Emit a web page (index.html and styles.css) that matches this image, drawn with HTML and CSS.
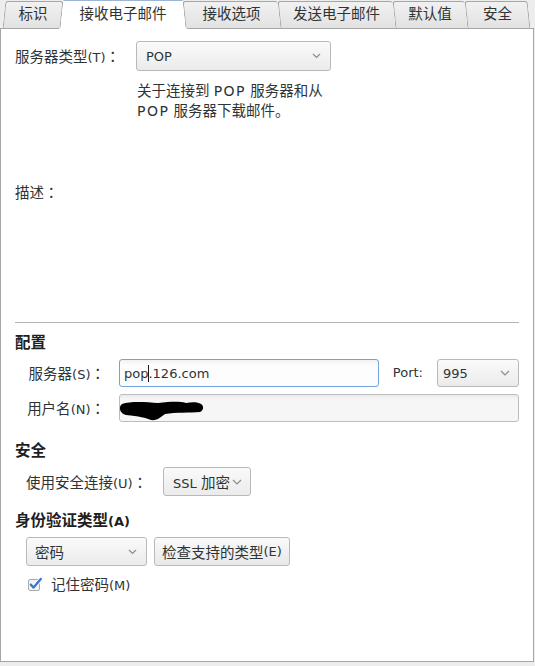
FILE: index.html
```html
<!DOCTYPE html>
<html lang="zh-CN">
<head>
<meta charset="utf-8">
<title>接收电子邮件</title>
<link rel="stylesheet" href="styles.css">
</head>
<body>
<div class="tabs">
  <div class="tab l">标识</div>
  <div class="tab active">接收电子邮件</div>
  <div class="tab r first">接收选项</div>
  <div class="tab r">发送电子邮件</div>
  <div class="tab r">默认值</div>
  <div class="tab r last">安全</div>
</div>
<div class="panel">
  <div class="type-grid">
    <div class="lbl"><span class="zh">服务器类型</span>(T)<span class="colon" lang="zh-TW">：</span></div>
    <div class="combo combo-type"><span>POP</span><svg class="chev" width="9" height="6" viewBox="0 0 9 6"><path d="M1 1 L4.5 4.5 L8 1" fill="none" stroke="#8c8c8c" stroke-width="1.2"/></svg></div>
    <div class="desc">
      <div class="desc-line"><span class="zh">关于连接到</span> <span class="lat">POP</span> <span class="zh">服务器和从</span></div>
      <div class="desc-line"><span class="lat">POP</span> <span class="zh">服务器下载邮件。</span></div>
    </div>
  </div>
  <div class="desc-label">描述<span class="colon" lang="zh-TW">：</span></div>
  <div class="sep"></div>

  <div class="heading first-heading"><span class="zh">配置</span></div>
  <div class="server-grid">
    <div class="lbl right"><span class="zh">服务器</span>(S)<span class="colon" lang="zh-TW">：</span></div>
    <div class="field focus"><span>pop</span><span class="caret"></span><span>.126.com</span></div>
    <div class="lbl">Port:</div>
    <div class="combo combo-port"><span>995</span><svg class="chev" width="10" height="6" viewBox="0 0 10 6"><path d="M1 1 L5 5 L9 1" fill="none" stroke="#8c8c8c" stroke-width="1.2"/></svg></div>
    <div class="lbl right"><span class="zh">用户名</span>(N)<span class="colon" lang="zh-TW">：</span></div>
    <div class="field user"><svg class="blob" width="86" height="20" viewBox="0 0 86 20"><path d="M4 3 C12 0 28 1 40 2 C52 1 60 0 68 2 C74 1 80 1 83 3 C86 5 86 9 82 11 C72 12 58 11 47 13 C43 16 39 20 33 19 C28 17 21 15 8 14 C2 13 0 6 4 3 Z" fill="#000"/></svg></div>
  </div>

  <div class="heading sec-heading"><span class="zh">安全</span></div>
  <div class="sec-row">
    <div class="lbl"><span class="zh">使用安全连接</span>(U)<span class="colon" lang="zh-TW">：</span></div>
    <div class="combo combo-ssl"><span>SSL <span class="zh">加密</span></span><svg class="chev" width="10" height="6" viewBox="0 0 10 6"><path d="M1 1 L5 5 L9 1" fill="none" stroke="#8c8c8c" stroke-width="1.2"/></svg></div>
  </div>

  <div class="heading auth-heading"><span class="zh">身份验证类型</span>(A)</div>
  <div class="auth-row">
    <div class="combo combo-auth"><span class="zh">密码</span><svg class="chev" width="9" height="6" viewBox="0 0 9 6"><path d="M1 1 L4.5 4.5 L8 1" fill="none" stroke="#8c8c8c" stroke-width="1.2"/></svg></div>
    <div class="button"><span class="zh">检查支持的类型</span>(E)</div>
  </div>

  <div class="check-row">
    <svg class="check" width="16" height="16" viewBox="0 0 16 16"><rect x="0.5" y="3.5" width="11" height="11" rx="1.5" fill="#f2f2f2" stroke="#a9a9a9"/><path d="M2.8 8.6 L5.6 11.6 L12.8 3" fill="none" stroke="#ffffff" stroke-width="4" stroke-linecap="round" stroke-linejoin="round"/><path d="M2.8 8.6 L5.6 11.6 L12.8 3" fill="none" stroke="#3a77d0" stroke-width="2.4" stroke-linecap="round" stroke-linejoin="round"/></svg>
    <span class="check-label"><span class="zh">记住密码</span>(M)</span>
  </div>
</div>
</body>
</html>
```

FILE: styles.css
```css
* { box-sizing: border-box; }
html, body { margin: 0; padding: 0; }
body {
  background: #ededed;
  font-family: "DejaVu Sans", "Noto Sans CJK SC", sans-serif;
  font-size: 13px;
  color: #2e3436;
  width: 535px;
  height: 666px;
  overflow: hidden;
}
.zh { font-size: 14.5px; }
.colon {
  font-family: "Noto Sans CJK TC", "Noto Sans CJK SC", sans-serif;
  font-size: 14.5px;
}

/* tabs */
.tabs {
  display: grid;
  grid-template-columns: 58px 122px 95px 115px 72px 63px;
  margin-left: 4px;
  height: 28px;
  position: relative;
  isolation: isolate;
}
.tab {
  position: relative;
  display: flex;
  align-items: center;
  justify-content: center;
  font-size: 14.5px;
  line-height: 20px;
  color: #2e3436;
  white-space: nowrap;
}
.tab::before {
  content: "";
  position: absolute;
  top: 1px; bottom: 0; left: 0; right: 0;
  z-index: -1;
  background: linear-gradient(#f1f1f1, #e2e2e2);
  border: 1px solid #a6a6a6;
  border-bottom: 0;
  border-radius: 3px 3px 0 0;
}
.tab.l::before { transform: skewX(-6deg); }
.tab.r::before { transform: skewX(6deg); border-right: 0; }
.tab.r.last::before { border-right: 1px solid #a6a6a6; }
.tab.active::before {
  top: 0; bottom: -1px; left: -3px; right: -3px;
  z-index: -2;
  background: #ffffff;
  border: 0;
  border-top: 1px solid #9db6d6;
  border-radius: 0;
  clip-path: polygon(4.5px 0, calc(100% - 4.5px) 0, 100% 100%, 0 100%);
}

/* panel */
.panel {
  width: 534px;
  height: 634px;
  background: #ffffff;
  border: 1px solid #a6a6a6;
  padding: 12px 14px 0 14px;
}
.lbl { white-space: nowrap; line-height: 20px; height: 20px; }
.lbl.right { text-align: right; }

.type-grid {
  display: grid;
  grid-template-columns: 121px 195px;
  align-items: center;
}
.combo {
  display: flex;
  align-items: center;
  justify-content: space-between;
  border: 1px solid #b9b9b9;
  border-radius: 3px;
  background: linear-gradient(#fafafa, #ebebeb);
  padding: 0 9px;
  white-space: nowrap;
}
.combo-type { height: 30px; }
.desc {
  grid-column: 2;
  margin-top: 10px;
  padding-left: 1px;
  white-space: nowrap;
}
.desc-line { height: 20px; line-height: 20px; }
.desc .lat { font-size: 14px; letter-spacing: 1.5px; }
.desc-label { margin-top: 61px; line-height: 20px; height: 20px; font-size: 14.5px; }
.sep { height: 1px; background: #b4b4b4; margin-top: 120px; }

.heading {
  font-weight: bold;
  line-height: 20px;
  height: 20px;
  color: #1f1f1f;
}
.heading .zh { font-size: 15.5px; }
.first-heading { margin-top: 10px; }
.sec-heading { margin-top: 19px; }
.auth-heading { margin-top: 15px; }

.server-grid {
  display: grid;
  grid-template-columns: 79px 1fr auto 82px;
  grid-auto-rows: 28px;
  column-gap: 14px;
  row-gap: 7px;
  align-items: center;
  margin-top: 6px;
  padding-left: 11px;
}
.field {
  height: 28px;
  border: 1px solid #bdbdbd;
  border-radius: 3px;
  background: linear-gradient(#ebebeb, #f6f6f6 5px);
  display: flex;
  align-items: center;
  white-space: nowrap;
}
.field.focus {
  border-color: #72a2d9;
  background: linear-gradient(#f0f0f0, #fdfdfd 5px);
  padding-left: 4px;
}
.caret {
  display: inline-block;
  width: 1px;
  height: 17px;
  background: #1a1a1a;
  margin-right: -1px;
}
.field.user { grid-column: 2 / 5; }
.blob { align-self: flex-end; margin-left: -2px; }
.combo-port { height: 28px; padding: 0 8px 0 5px; }

.sec-row {
  display: grid;
  grid-template-columns: 123px auto;
  grid-template-rows: 29px;
  column-gap: 14px;
  align-items: center;
  justify-content: start;
  margin-top: 6px;
  padding-left: 11px;
}
.combo-ssl { height: 29px; padding: 0 8px 0 9px; justify-content: flex-start; gap: 2px; }

.auth-row {
  display: flex;
  gap: 7px;
  height: 29px;
  margin-top: 6px;
  padding-left: 11px;
}
.combo-auth { width: 121px; height: 29px; padding: 0 9px 0 8px; }
.button {
  height: 29px;
  display: flex;
  align-items: center;
  border: 1px solid #b9b9b9;
  border-radius: 3px;
  background: linear-gradient(#fafafa, #e8e8e8);
  padding: 0 7px;
  white-space: nowrap;
}

.check-row {
  display: flex;
  align-items: center;
  margin-top: 9px;
  padding-left: 13px;
  height: 20px;
  line-height: 20px;
}
.check { margin-right: 7px; margin-top: -3px; }
```
